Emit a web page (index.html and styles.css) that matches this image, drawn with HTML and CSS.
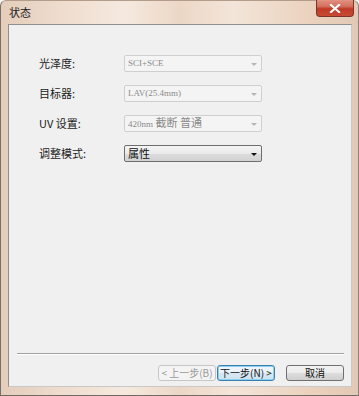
FILE: index.html
```html
<!DOCTYPE html>
<html>
<head>
<meta charset="utf-8">
<link rel="stylesheet" href="styles.css">
</head>
<body>
<div class="window">
  <div class="titlebar">
    <span class="title">状态</span>
    <div class="close">
      <svg width="12" height="9" viewBox="0 0 12 9"><path d="M2 1 L10 8 M10 1 L2 8" stroke="#fff" stroke-width="2.2" stroke-linecap="square"/></svg>
    </div>
  </div>
  <div class="client">
    <div class="form">
      <span class="label">光泽度:</span>
      <div class="combo disabled"><span class="val mono">SCI+SCE</span><span class="arrow"></span></div>
      <span class="label">目标器:</span>
      <div class="combo disabled"><span class="val mono">LAV(25.4mm)</span><span class="arrow"></span></div>
      <span class="label">UV 设置:</span>
      <div class="combo disabled"><span class="val"><span class="mono">420nm</span> 截断 普通</span><span class="arrow"></span></div>
      <span class="label">调整模式:</span>
      <div class="combo enabled"><span class="val">属性</span><span class="arrow"></span></div>
    </div>
    <div class="spacer"></div>
    <div class="footer">
      <div class="sep"></div>
      <div class="buttons">
        <div class="btn disabledbtn">&lt; 上一步(B)</div>
        <div class="btn default">下一步(N) &gt;</div>
        <div class="btn cancel">取消</div>
      </div>
    </div>
  </div>
</div>
</body>
</html>
```
FILE: styles.css
```css
html, body {
  margin: 0;
  padding: 0;
  background: #fff;
}
.window {
  width: 359px;
  height: 396px;
  box-sizing: border-box;
  padding: 0 6px 8px 7px;
  display: flex;
  flex-direction: column;
  background: linear-gradient(90deg, #e4cdbb 0%, #f0dfd1 20%, #f5e9df 35%, #ecd7c6 50%, #f3e5d9 65%, #ebd3c0 85%, #e3c9b5 100%);
  border-left: 1px solid #7a6e66;
  border-right: 1px solid #8e8378;
  border-bottom: 1px solid #6f6a66;
  border-top: 1px solid #b49c8a;
  border-radius: 6px 6px 0 0;
  font-family: "Noto Sans CJK SC", "Liberation Sans", sans-serif;
}
.titlebar {
  height: 23px;
  display: flex;
  align-items: flex-start;
  justify-content: space-between;
}
.title {
  font-size: 11px;
  color: #1a1a1a;
  margin-top: 3px;
  margin-left: 1px;
}
.close {
  width: 38px;
  height: 17px;
  margin-right: -2px;
  margin-top: -1px;
  box-sizing: border-box;
  border: 1px solid #7e3327;
  border-top: none;
  border-radius: 0 0 4px 4px;
  background: linear-gradient(180deg, #e39282 0%, #d2705d 40%, #c03a26 55%, #c84a35 100%);
  display: flex;
  align-items: center;
  justify-content: center;
}
.client {
  flex: 1;
  background: #f0f0f0;
  border: 1px solid #8f8f8f;
  border-right-color: #c8c8c8;
  border-bottom-color: #c8c8c8;
  display: flex;
  flex-direction: column;
}
.form {
  margin-top: 30px;
  padding-left: 30px;
  display: grid;
  grid-template-columns: 85px 138px;
  grid-auto-rows: 17px;
  row-gap: 13px;
  align-items: center;
}
.label {
  font-size: 11px;
  color: #222;
  line-height: 17px;
}
.combo {
  height: 17px;
  box-sizing: border-box;
  border-radius: 2px;
  display: flex;
  align-items: center;
  justify-content: space-between;
  padding: 0 4px 0 3px;
  font-size: 11px;
}
.combo.disabled {
  border: 1px solid #cfcfcf;
  background: #f4f4f4;
  color: #8a8a8a;
}
.combo.enabled {
  border: 1px solid #6e6e6e;
  background: linear-gradient(180deg, #f4f4f4 0%, #eaeaea 50%, #dcdcdc 51%, #d2d2d2 100%);
  color: #111;
}
.val {
  line-height: 15px;
}
.mono {
  font-family: "Liberation Serif", serif;
  font-size: 9px;
}
.arrow {
  width: 0;
  height: 0;
  border-left: 3px solid transparent;
  border-right: 3px solid transparent;
  border-top: 3px solid #b5b5b5;
  margin-top: 1px;
}
.combo.enabled .arrow {
  border-top-color: #111;
}
.spacer {
  flex: 1;
}
.footer {
  padding: 0 0 5px 8px;
}
.sep {
  height: 1px;
  background: #a0a0a0;
  margin-right: 7px;
  border-bottom: 1px solid #fff;
}
.buttons {
  margin-top: 10px;
  display: flex;
  justify-content: flex-end;
  padding-right: 7px;
}
.btn {
  width: 58px;
  height: 16px;
  box-sizing: border-box;
  border-radius: 3px;
  font-size: 10px;
  line-height: 14px;
  text-align: center;
  white-space: nowrap;
}
.disabledbtn {
  border: 1px solid #c6c6c6;
  background: #f4f4f4;
  color: #9a9a9a;
  margin-right: 1px;
}
.default {
  border: 1px solid #3c7fb1;
  box-shadow: inset 0 0 0 1px #8ed0f0;
  background: linear-gradient(180deg, #f2f8fc 0%, #e6f1f8 50%, #d6e8f4 51%, #cde2f0 100%);
  color: #111;
  margin-right: 11px;
}
.cancel {
  border: 1px solid #707070;
  background: linear-gradient(180deg, #f2f2f2 0%, #ebebeb 50%, #dddddd 51%, #cfcfcf 100%);
  color: #111;
}
```
